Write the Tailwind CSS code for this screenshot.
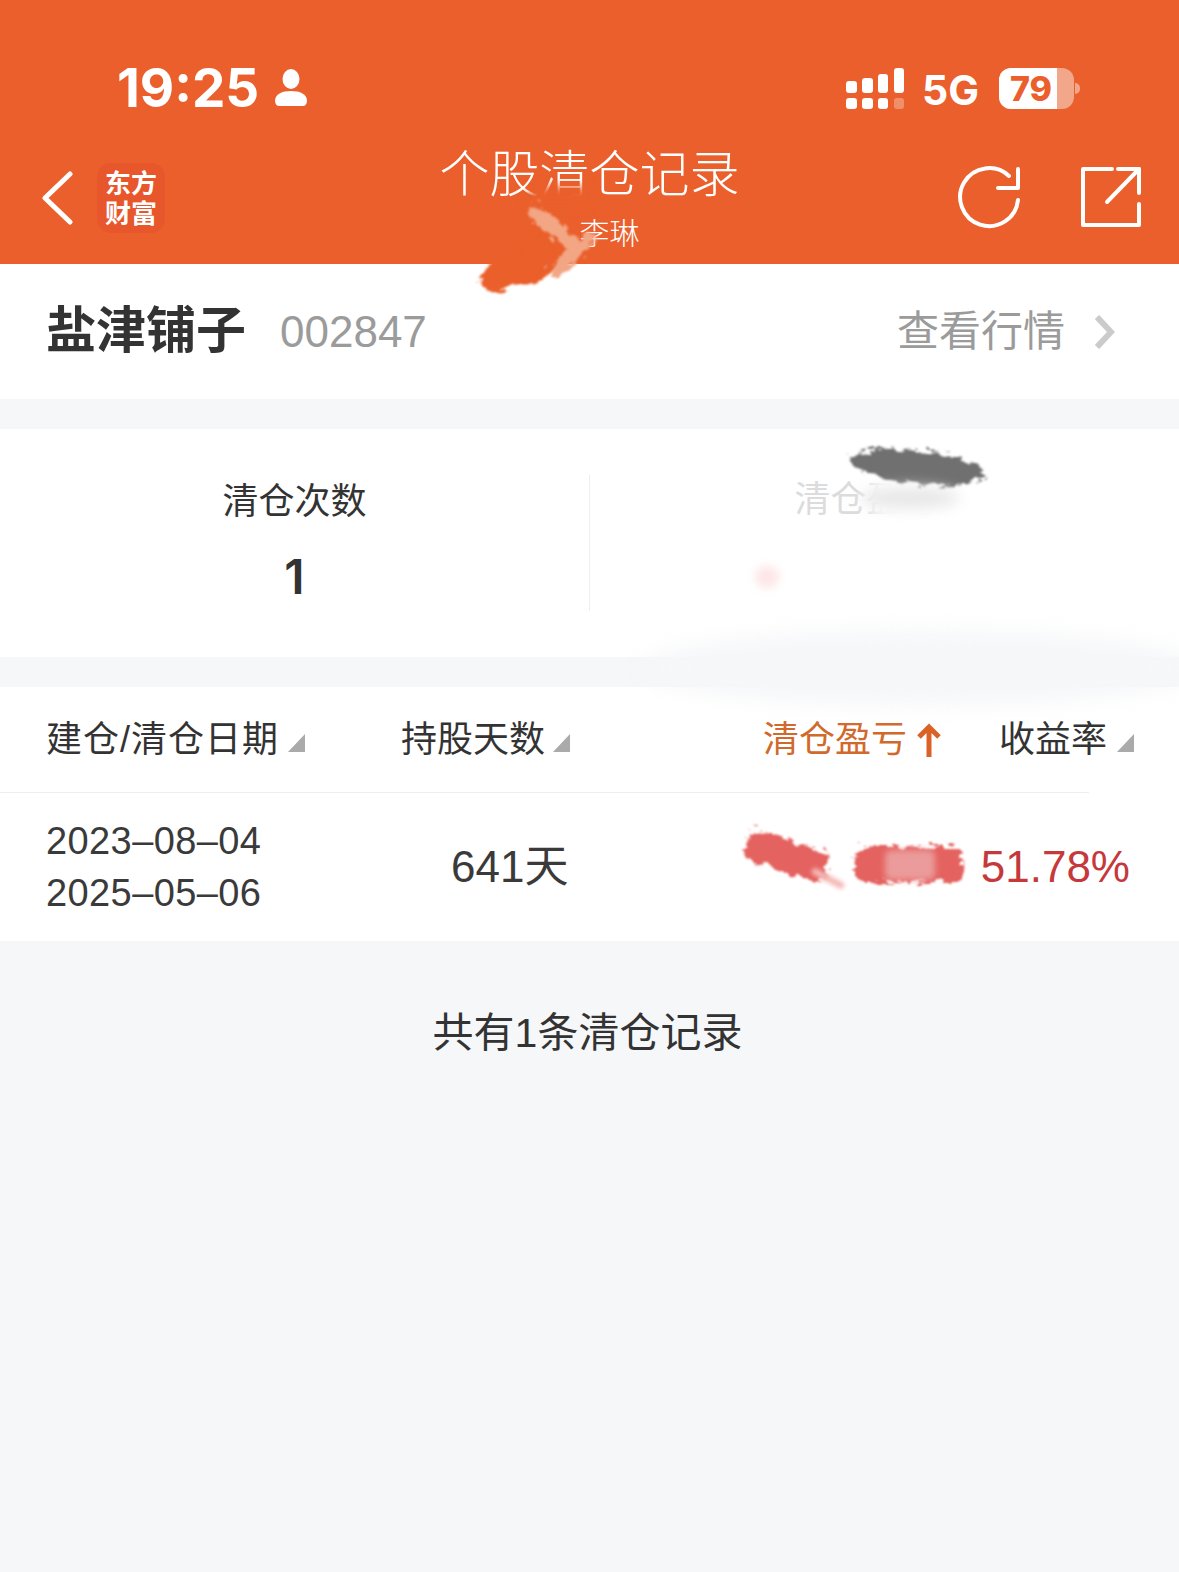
<!DOCTYPE html>
<html lang="zh-CN">
<head>
    <meta charset="UTF-8">
    <meta name="viewport" content="width=device-width, initial-scale=1.0">
    <title>个股清仓记录</title>
    <script src="https://cdn.jsdelivr.net/npm/@tailwindcss/browser@4"></script>
</head>
<body class="bg-[#f6f7f9]">
<div class="relative w-[1179px] h-[1572px] overflow-hidden bg-[#f6f7f9] text-[#333] font-['Liberation_Sans','Noto_Sans_CJK_SC',sans-serif]">

    <svg class="absolute h-0 w-0">
        <filter id="brush" x="-20%" y="-40%" width="140%" height="180%">
            <feTurbulence type="fractalNoise" baseFrequency="0.09 0.22" numOctaves="3" seed="4"/>
            <feDisplacementMap in="SourceGraphic" scale="16"/>
            <feGaussianBlur stdDeviation="1.2"/>
        </filter>
    </svg>

    <!-- header -->
    <header class="h-[264px] bg-[#ea5f2b] text-white">
        <div class="flex h-[132px] items-start justify-between pt-[66px] pl-[117px] pr-[99px]">
            <div class="flex items-center gap-[15px]">
                <span class="text-[53px] leading-[44px] font-bold font-['Inter',sans-serif]">19:25</span>
                <svg class="w-[34px] h-[38px]" viewBox="0 0 34 38" fill="#fff">
                    <ellipse cx="17" cy="10" rx="8.5" ry="10"/>
                    <path d="M1 32c0-7 7-10 16-10s16 3 16 10c0 3-2 5-4 5H5c-2 0-4-2-4-5z"/>
                </svg>
            </div>
            <div class="flex items-center">
                <svg class="w-[60px] h-[42px]" viewBox="0 0 60 42" fill="#fff">
                    <rect x="0" y="13" width="11" height="12" rx="3"/>
                    <rect x="16" y="10" width="11" height="15" rx="3"/>
                    <rect x="32" y="6" width="10" height="19" rx="3"/>
                    <rect x="48" y="0" width="10" height="25" rx="3"/>
                    <rect x="0" y="30" width="11" height="11" rx="3"/>
                    <rect x="16" y="30" width="11" height="11" rx="3"/>
                    <rect x="32" y="30" width="10" height="11" rx="3"/>
                    <rect x="48" y="30" width="10" height="11" rx="3" fill-opacity=".3"/>
                </svg>
                <span class="ml-[16px] text-[41px] leading-[42px] font-bold font-['Inter',sans-serif] mt-[3px]">5G</span>
                <div class="relative ml-[20px] flex h-[41px] w-[75px] overflow-hidden rounded-[12px] bg-white/45">
                    <div class="flex h-full w-[58px] items-center justify-center bg-white pl-[6px] text-[34px] font-extrabold text-[#ea5f2b] font-['Inter',sans-serif]">79</div>
                </div>
                <div class="ml-[1px] h-[11px] w-[5px] rounded-r-full bg-white/45"></div>
            </div>
        </div>
        <div class="relative flex h-[132px] items-start justify-between pl-[42px] pr-[37px]">
            <div class="flex items-center gap-[24px] pt-[31px]">
                <svg class="w-[31px] h-[54px]" viewBox="0 0 31 54" fill="none" stroke="#fff" stroke-width="5" stroke-linecap="round" stroke-linejoin="round">
                    <path d="M28 3 3 27l25 24"/>
                </svg>
                <div class="flex h-[70px] w-[68px] flex-col items-center justify-center rounded-[14px] bg-[#e8562c] pt-[2px] text-[26px] leading-[30px] font-bold">
                    <span>东方</span>
                    <span>财富</span>
                </div>
            </div>
            <div class="absolute inset-x-0 top-[13px] flex flex-col items-center">
                <h1 class="text-[50px] leading-[60px] font-light">个股清仓记录</h1>
                <p class="mt-[11px] pl-[40px] text-[30px] leading-[36px] font-light">李琳</p>
            </div>
            <div class="flex items-center gap-[57px] pt-[34px]">
                <svg class="w-[64px] h-[64px]" viewBox="0 0 64 64" fill="none" stroke="#fff" stroke-width="4" stroke-linecap="round" stroke-linejoin="round">
                    <path d="M61 34A29 29 0 1 1 52 10"/>
                    <path d="M61 3v19H41"/>
                </svg>
                <svg class="w-[64px] h-[64px]" viewBox="0 0 64 64" fill="none" stroke="#fff" stroke-width="4" stroke-linecap="round" stroke-linejoin="round">
                    <path d="M34 3H5v56h56V38"/>
                    <path d="M29 36 61 3"/>
                    <path d="M40 3h21v24"/>
                </svg>
            </div>
        </div>
    </header>

    <!-- stock title -->
    <section class="flex h-[135px] items-center bg-white pl-[46px] pr-[64px]">
        <h2 class="text-[50px] font-bold">盐津铺子</h2>
        <span class="ml-[34px] text-[44px] text-[#9b9b9b]">002847</span>
        <div class="ml-auto flex items-center gap-[29px]">
            <span class="text-[42px] text-[#9b9b9b]">查看行情</span>
            <svg class="w-[21px] h-[34px]" viewBox="0 0 21 34" fill="none" stroke="#cbcbcb" stroke-width="6">
                <path d="M3 2l14 15L3 32"/>
            </svg>
        </div>
    </section>

    <!-- summary -->
    <section class="mt-[30px] flex h-[228px] items-center bg-white">
        <div class="flex w-[589px] flex-col items-center pb-[4px]">
            <span class="text-[36px] leading-[50px]">清仓次数</span>
            <span class="mt-[22px] text-[48px] leading-[56px] font-semibold font-['Inter',sans-serif]">1</span>
        </div>
        <div class="h-[136px] w-px bg-[#eeeeee]"></div>
        <div class="flex flex-1 flex-col items-center pb-[86px] pr-[36px] text-center">
            <span class="text-[36px] leading-[50px] text-[#dcdcdc]">清仓盈亏</span>
        </div>
    </section>

    <!-- table -->
    <section class="mt-[30px] bg-white">
        <div class="flex h-[105px] items-center text-[36px]">
            <div class="flex w-[401px] items-center pl-[46px]">
                <span class="tracking-[1px]">建仓/清仓日期</span>
                <svg class="ml-[9px] mt-[6px] w-[17px] h-[18px]" viewBox="0 0 17 18"><polygon points="17,0 17,18 0,18" fill="#aaa"/></svg>
            </div>
            <div class="flex w-[362px] items-center">
                持股天数
                <svg class="ml-[8px] mt-[6px] w-[17px] h-[18px]" viewBox="0 0 17 18"><polygon points="17,0 17,18 0,18" fill="#aaa"/></svg>
            </div>
            <div class="flex w-[236px] items-center text-[#d2692c]">
                清仓盈亏
                <svg class="ml-[10px] w-[24px] h-[34px]" viewBox="0 0 24 34" fill="none" stroke="#db6226" stroke-width="5"><path d="M12 34V4M2 14 12 4l10 10"/></svg>
            </div>
            <div class="flex items-center">
                收益率
                <svg class="ml-[10px] mt-[6px] w-[17px] h-[18px]" viewBox="0 0 17 18"><polygon points="17,0 17,18 0,18" fill="#aaa"/></svg>
            </div>
        </div>
        <div class="h-px w-[1089px] bg-[#eeeeee]"></div>
        <div class="flex h-[148px] items-center">
            <div class="w-[451px] pl-[46px] text-[38px] leading-[52px] tracking-[0.4px] text-[#3a3a3a]">
                <div>2023–08–04</div>
                <div>2025–05–06</div>
            </div>
            <div class="text-[44px] text-[#3a3a3a]">641天</div>
            <div class="ml-auto pr-[49px] text-[44px] text-[#c5393c]">51.78%</div>
        </div>
    </section>

    <p class="mt-[64px] pr-[4px] text-center text-[41px] leading-[56px]">共有1条清仓记录</p>

    <!-- brush marks painted over the screenshot -->
    <div class="absolute left-[528px] top-[186px] h-[22px] w-[62px] rounded-full bg-[#ea5f2b] blur-[5px]"></div>
    <div class="absolute left-[505px] top-[235px] h-[42px] w-[70px] -rotate-[35deg] rounded-full bg-[#ea5f2b] [filter:url(#brush)]"></div>
    <div class="absolute left-[478px] top-[252px] h-[30px] w-[80px] -rotate-[25deg] rounded-full bg-[#ea5f2b] [filter:url(#brush)]"></div>
    <div class="absolute left-[522px] top-[220px] h-[16px] w-[64px] rotate-[40deg] rounded-full bg-[#f3a684] [filter:url(#brush)]"></div>
    <div class="absolute left-[542px] top-[248px] h-[14px] w-[60px] -rotate-[45deg] rounded-full bg-[#f3a684] [filter:url(#brush)]"></div>

    <div class="absolute left-[868px] top-[470px] h-[56px] w-[140px] rounded-full bg-white blur-[8px]"></div>
    <div class="absolute left-[850px] top-[450px] h-[34px] w-[135px] rotate-[6deg] rounded-[50%] bg-[#707070] [filter:url(#brush)]"></div>
    <div class="absolute left-[860px] top-[487px] h-[22px] w-[100px] rounded-[50%] bg-[#e8e8e8] blur-[7px]"></div>
    <div class="absolute left-[755px] top-[566px] h-[22px] w-[24px] rounded-full bg-[#fde6e6] blur-[4px]"></div>
    <div class="absolute left-[640px] top-[630px] h-[76px] w-[560px] rounded-[50%] bg-[#f6f7f9] blur-[10px]"></div>

    <div class="absolute left-[745px] top-[840px] h-[32px] w-[85px] rotate-[18deg] rounded-[8px] bg-[#e4625f] [filter:url(#brush)]"></div>
    <div class="absolute left-[810px] top-[875px] h-[7px] w-[36px] rotate-[28deg] rounded-full bg-[#f4b9b6] blur-[2px]"></div>
    <div class="absolute left-[855px] top-[846px] h-[36px] w-[108px] rounded-[10px] bg-[#e4625f] [filter:url(#brush)]"></div>
    <div class="absolute left-[885px] top-[850px] h-[30px] w-[50px] rounded-[6px] bg-[#eb9b9b] blur-[3px]"></div>
</div>
</body>
</html>
